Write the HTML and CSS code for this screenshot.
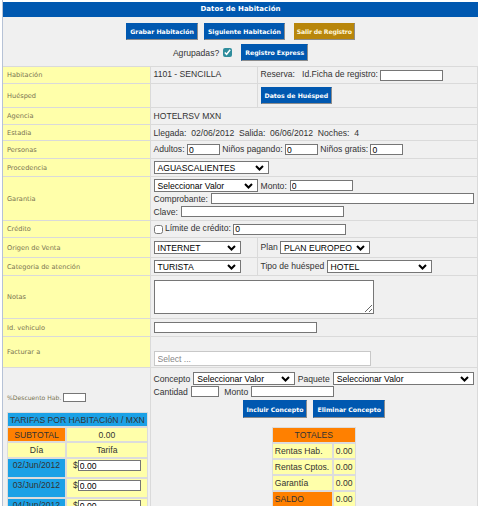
FILE: index.html
```html
<!DOCTYPE html>
<html lang="es">
<head>
    <meta charset="UTF-8">
    <title>Datos de Habitación</title>
    <link rel="stylesheet" href="styles.css">
</head>
<body>
    <div class="page">
        <div class="title">Datos de Habitación</div>

        <div class="toolbar">
            <div class="tool-row">
                <button class="btn">Grabar Habitación</button>
                <button class="btn">Siguiente Habitación</button>
                <button class="btn btn-gold">Salir de Registro</button>
            </div>
            <div class="tool-row">
                <span>Agrupadas?</span>
                <input type="checkbox" class="chk chk-teal" checked>
                <button class="btn btn-express">Registro Express</button>
            </div>
        </div>

        <table class="form">
            <colgroup>
                <col class="col-lbl">
                <col class="col-mid">
                <col>
            </colgroup>
            <tr class="r17">
                <td class="lbl">Habitación</td>
                <td class="top">1101 - SENCILLA</td>
                <td>Reserva: &nbsp; Id.Ficha de registro: <input class="txt w62"></td>
            </tr>
            <tr class="r24">
                <td class="lbl">Huésped</td>
                <td></td>
                <td><button class="btn">Datos de Huésped</button></td>
            </tr>
            <tr class="r17">
                <td class="lbl">Agencia</td>
                <td colspan="2">HOTELRSV MXN</td>
            </tr>
            <tr class="r16">
                <td class="lbl">Estadia</td>
                <td colspan="2">Llegada: &nbsp;02/06/2012 &nbsp;Salida: &nbsp;06/06/2012 &nbsp;Noches: &nbsp;4</td>
            </tr>
            <tr class="r18">
                <td class="lbl">Personas</td>
                <td colspan="2">Adultos: <input class="txt w32" value="0"> Niños pagando: <input class="txt w32" value="0"> Niños gratis: <input class="txt w32" value="0"></td>
            </tr>
            <tr class="r18">
                <td class="lbl">Procedencia</td>
                <td colspan="2"><span class="sel w114">AGUASCALIENTES<svg width="9" height="6" viewBox="0 0 9 6"><path d="M1 1 L4.5 4.5 L8 1" fill="none" stroke="#000" stroke-width="2"/></svg></span></td>
            </tr>
            <tr class="r44">
                <td class="lbl">Garantia</td>
                <td colspan="2">
                    <div class="line"><span class="sel w103">Seleccionar Valor<svg width="9" height="6" viewBox="0 0 9 6"><path d="M1 1 L4.5 4.5 L8 1" fill="none" stroke="#000" stroke-width="2"/></svg></span> Monto: <input class="txt w62" value="0"></div>
                    <div class="line">Comprobante: <input class="txt w262"></div>
                    <div class="line">Clave: <input class="txt w162"></div>
                </td>
            </tr>
            <tr class="r17">
                <td class="lbl">Crédito</td>
                <td colspan="2"><input type="checkbox" class="chk"> Límite de crédito: <input class="txt w112" value="0"></td>
            </tr>
            <tr class="r20">
                <td class="lbl">Origen de Venta</td>
                <td><span class="sel w86">INTERNET<svg width="9" height="6" viewBox="0 0 9 6"><path d="M1 1 L4.5 4.5 L8 1" fill="none" stroke="#000" stroke-width="2"/></svg></span></td>
                <td>Plan <span class="sel w89">PLAN EUROPEO<svg width="9" height="6" viewBox="0 0 9 6"><path d="M1 1 L4.5 4.5 L8 1" fill="none" stroke="#000" stroke-width="2"/></svg></span></td>
            </tr>
            <tr class="r18">
                <td class="lbl">Categoria de atención</td>
                <td><span class="sel w86">TURISTA<svg width="9" height="6" viewBox="0 0 9 6"><path d="M1 1 L4.5 4.5 L8 1" fill="none" stroke="#000" stroke-width="2"/></svg></span></td>
                <td>Tipo de huésped <span class="sel w104">HOTEL<svg width="9" height="6" viewBox="0 0 9 6"><path d="M1 1 L4.5 4.5 L8 1" fill="none" stroke="#000" stroke-width="2"/></svg></span></td>
            </tr>
            <tr class="r43">
                <td class="lbl">Notas</td>
                <td colspan="2"><textarea class="notes"></textarea></td>
            </tr>
            <tr class="r18">
                <td class="lbl">Id. vehiculo</td>
                <td colspan="2"><input class="txt w162"></td>
            </tr>
            <tr class="r31">
                <td class="lbl">Facturar a</td>
                <td colspan="2"><input class="search" placeholder="Select ..."></td>
            </tr>
            <tr>
                <td class="cell-left">
                    <div class="desc"><span class="mini">%Descuento Hab.</span><input class="txt w23"></div>
                    <table class="tarifas">
                        <tr><td colspan="2" class="blue">TARIFAS POR HABITACIóN / MXN</td></tr>
                        <tr><td class="orange">SUBTOTAL</td><td class="yellow">0.00</td></tr>
                        <tr class="head"><td class="yellow">Día</td><td class="yellow">Tarifa</td></tr>
                        <tr class="day"><td class="blue">02/Jun/2012</td><td class="yellow">$<input class="txt w62" value="0.00"></td></tr>
                        <tr class="day"><td class="blue">03/Jun/2012</td><td class="yellow">$<input class="txt w62" value="0.00"></td></tr>
                        <tr class="day"><td class="blue">04/Jun/2012</td><td class="yellow">$<input class="txt w62" value="0.00"></td></tr>
                    </table>
                </td>
                <td colspan="2" class="cell-right">
                    <div class="line">Concepto <span class="sel w101">Seleccionar Valor<svg width="9" height="6" viewBox="0 0 9 6"><path d="M1 1 L4.5 4.5 L8 1" fill="none" stroke="#000" stroke-width="2"/></svg></span> Paquete <span class="sel w141">Seleccionar Valor<svg width="9" height="6" viewBox="0 0 9 6"><path d="M1 1 L4.5 4.5 L8 1" fill="none" stroke="#000" stroke-width="2"/></svg></span></div>
                    <div class="line">Cantidad <input class="txt w27"> &nbsp;Monto <input class="txt w82"></div>
                    <div class="concept-btns">
                        <button class="btn">Incluir Concepto</button>
                        <button class="btn">Eliminar Concepto</button>
                    </div>
                    <table class="totales">
                        <tr><td colspan="2" class="orange center">TOTALES</td></tr>
                        <tr><td class="yellow">Rentas Hab.</td><td class="yellow">0.00</td></tr>
                        <tr><td class="yellow">Rentas Cptos.</td><td class="yellow">0.00</td></tr>
                        <tr><td class="yellow">Garantía</td><td class="yellow">0.00</td></tr>
                        <tr><td class="orange">SALDO</td><td class="yellow">0.00</td></tr>
                    </table>
                </td>
            </tr>
        </table>
    </div>
</body>
</html>
```

FILE: styles.css
```css
body {
    margin: 0;
    background-color: #fff;
    font-family: "Liberation Sans", Arial, sans-serif;
    font-size: 8.6px;
    color: #333;
}
.page {
    margin-left: 2px;
    border-left: 1px solid #b6c2d6;
    padding-top: 2px;
    min-height: 504px;
}
.title {
    height: 15px;
    line-height: 15px;
    background-color: #0058b0;
    color: white;
    text-align: center;
    font-family: "DejaVu Sans", Verdana, sans-serif;
    font-size: 7px;
    font-weight: bold;
}
.toolbar {
    background-color: #f0f0f0;
    padding: 6px 0 5px;
}
.tool-row {
    display: flex;
    justify-content: center;
    align-items: center;
    gap: 6px;
    height: 17px;
}
.tool-row + .tool-row {
    margin-top: 4px;
    gap: 4px;
}
.btn {
    height: 17px;
    padding: 0 3px;
    background-color: #0058b0;
    color: white;
    border: 1px solid;
    border-color: #0058b0 #8c8c8c #8c8c8c #0058b0;
    font-family: "DejaVu Sans", Verdana, sans-serif;
    font-size: 6.2px;
    font-weight: bold;
    cursor: pointer;
}
.btn-gold {
    margin-left: 3px;
    padding: 0 2px;
    background-color: #b8860b;
    border-color: #b8860b #8c8c8c #8c8c8c #b8860b;
    color: #fff6d8;
    letter-spacing: -0.2px;
}
.btn-express {
    margin-left: 5px;
}
.chk {
    width: 9px;
    height: 9px;
    margin: 0;
    vertical-align: middle;
}
.chk-teal {
    accent-color: #2f8d9c;
}

/* tabla principal */
.form {
    width: 100%;
    border-collapse: collapse;
    table-layout: fixed;
    background-color: #f0f0f0;
}
.col-lbl {
    width: 147px;
}
.col-mid {
    width: 107px;
}
.form > tbody > tr > td {
    border: 1px solid #dadada;
    padding: 0 3px;
    vertical-align: middle;
    white-space: nowrap;
}
.form > tbody > tr > td:first-child {
    border-left: none;
}
.form > tbody > tr > td.top {
    padding-top: 2px;
    vertical-align: top;
}
.lbl {
    background-color: #ffffaa;
    color: #7a7452;
    font-family: "DejaVu Sans", Verdana, sans-serif;
    font-size: 6.6px;
}
.form > tbody > tr > td.lbl {
    padding-left: 4px;
}
.r16 { height: 16px; }
.r17 { height: 17px; }
.r18 { height: 18px; }
.r20 { height: 20px; }
.r24 { height: 24px; }
.r31 { height: 31px; }
.r43 { height: 43px; }
.r44 { height: 44px; }

.line {
    display: flex;
    align-items: center;
    gap: 3px;
    height: 13px;
}
.txt {
    box-sizing: border-box;
    height: 11px;
    padding: 0 1px;
    border: 1px solid #767676;
    background-color: white;
    font-family: "Liberation Sans", Arial, sans-serif;
    font-size: 8.6px;
    color: #000;
    vertical-align: middle;
}
.w23 { width: 23px; height: 9px; }
.w27 { width: 28px; }
.w32 { width: 33px; }
.w62 { width: 63px; }
.w82 { width: 83px; }
.w112 { width: 113px; }
.w162 { width: 163px; }
.w262 { width: 263px; }

.sel {
    box-sizing: border-box;
    display: inline-flex;
    align-items: center;
    justify-content: space-between;
    height: 13px;
    padding: 0 4px 0 3px;
    border: 1px solid #767676;
    background-color: white;
    color: #000;
    vertical-align: middle;
}
.w86 { width: 87px; }
.w89 { width: 90px; }
.w101 { width: 102px; }
.w103 { width: 104px; }
.w104 { width: 105px; }
.w114 { width: 115px; }
.w141 { width: 142px; }

.notes {
    box-sizing: border-box;
    display: block;
    width: 220px;
    height: 34px;
    margin: 0;
    border: 1px solid #767676;
}
.search {
    box-sizing: border-box;
    display: block;
    width: 217px;
    height: 15px;
    margin-top: 13px;
    padding: 0 3px;
    border: 1px solid #c8c8c8;
    font-family: "Liberation Sans", Arial, sans-serif;
    font-size: 8.6px;
}
.search::placeholder {
    color: #888;
}

/* parte inferior */
.form > tbody > tr > td.cell-left,
.form > tbody > tr > td.cell-right {
    vertical-align: top;
    padding-top: 4px;
}
.form > tbody > tr > td.cell-left {
    padding-left: 4px;
}
.mini {
    color: #7a7452;
    font-family: "DejaVu Sans", Verdana, sans-serif;
    font-size: 6.1px;
}
.desc {
    display: flex;
    align-items: center;
    gap: 2px;
    margin-top: 21px;
}
.tarifas,
.totales {
    border-collapse: separate;
    border-spacing: 0;
}
.tarifas {
    width: 140px;
    margin-top: 10px;
}
.tarifas td,
.totales td {
    border: 1px solid #dcdcdc;
    padding: 0 2px;
    height: 13px;
    text-align: center;
}
.tarifas td:first-child {
    width: 53px;
}
.tarifas .head td {
    height: 14px;
}
.tarifas .day td {
    height: 17px;
    vertical-align: top;
    padding-top: 1px;
}
.blue {
    background-color: #1ba1e6;
}
.orange {
    background-color: #ff8000;
}
.yellow {
    background-color: #ffffaa;
}
.concept-btns {
    display: flex;
    justify-content: center;
    gap: 6px;
    margin-top: 2px;
}
.concept-btns .btn {
    height: 18px;
}
.totales {
    margin: 9px auto 0;
    width: 84px;
}
.totales td {
    text-align: left;
    height: 14px;
}
.totales td.center {
    text-align: center;
}
```
